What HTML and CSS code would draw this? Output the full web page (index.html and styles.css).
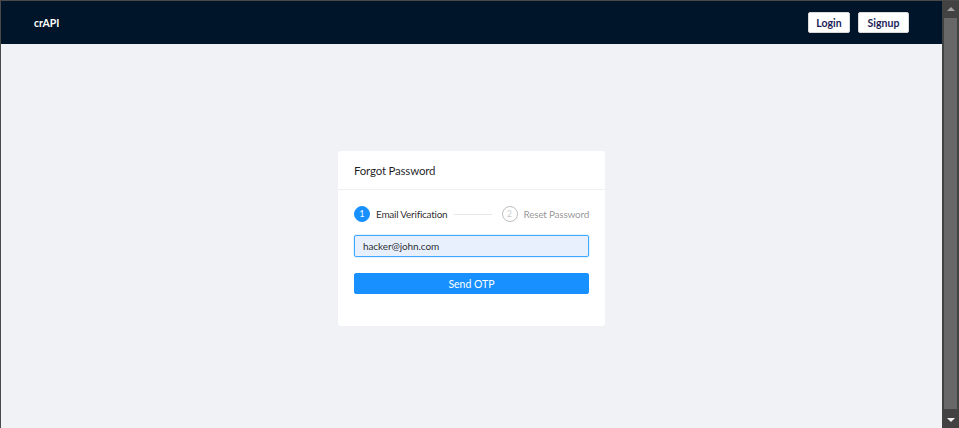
FILE: index.html
```html
<!DOCTYPE html>
<html>
<head>
<meta charset="utf-8">
<link rel="stylesheet" href="styles.css">
</head>
<body>
<div class="frame">
  <div class="page">
    <header class="topbar">
      <div class="brand">crAPI</div>
      <div class="actions">
        <button class="nav-btn">Login</button>
        <button class="nav-btn">Signup</button>
      </div>
    </header>
    <main class="main">
      <section class="card">
        <div class="card-head">Forgot Password</div>
        <div class="card-body">
          <div class="steps">
            <div class="step active">
              <span class="step-icon">1</span>
              <span class="step-title">Email Verification</span>
            </div>
            <div class="step-line"></div>
            <div class="step wait">
              <span class="step-icon">2</span>
              <span class="step-title">Reset Password</span>
            </div>
          </div>
          <input class="field" type="text" value="hacker@john.com">
          <button class="primary">Send OTP</button>
        </div>
      </section>
    </main>
  </div>
  <div class="scrollbar">
    <div class="arrow up"></div>
    <div class="track"><div class="thumb"></div></div>
    <div class="arrow down"></div>
  </div>
</div>
</body>
</html>
```

FILE: styles.css
```css
* { box-sizing: border-box; }
html, body { margin: 0; padding: 0; height: 100%; overflow: hidden; }
body { font-family: "Lato", "Noto Sans", sans-serif; color: rgba(0,0,0,0.85); }

.frame {
  display: flex;
  width: 959px;
  height: 428px;
  border-top: 1px solid #4a4a4a;
  border-left: 1px solid #4a4a4a;
  background: #f0f2f5;
}
.page { flex: 1; display: flex; flex-direction: column; min-width: 0; }

.topbar {
  height: 43px;
  background: #001529;
  display: flex;
  align-items: center;
  justify-content: space-between;
  padding: 0 33px 0 33px;
}
.brand { color: #fff; font-weight: 700; font-size: 10.5px; }
.actions { display: flex; gap: 8px; }
.nav-btn {
  height: 21px;
  padding: 0;
  background: #fff;
  border: 1px solid #d9d9d9;
  border-radius: 2px;
  font-family: inherit;
  font-weight: 700;
  font-size: 10.5px;
  color: #1c1c5a;
}
.nav-btn:first-child { width: 42px; }
.nav-btn:last-child { width: 51px; }

.main { flex: 1; display: flex; justify-content: center; align-items: flex-start; padding-top: 107px; }
.card { width: 267px; background: #fff; border-radius: 3px; }
.card-head {
  height: 39px;
  display: flex;
  align-items: center;
  padding: 0 16px;
  font-size: 11.5px;
  letter-spacing: -0.2px;
  color: rgba(0,0,0,0.88);
  border-bottom: 1px solid #f0f0f0;
}
.card-body { padding: 16px 16px 32px; display: flex; flex-direction: column; }

.steps { display: flex; align-items: center; height: 16px; }
.step { display: flex; align-items: center; gap: 6px; font-size: 10px; letter-spacing: -0.25px; white-space: nowrap; }
.step-icon {
  width: 16px; height: 16px; border-radius: 50%;
  display: flex; align-items: center; justify-content: center;
  font-size: 8.5px; letter-spacing: 0;
}
.step.active .step-icon { background: #1890ff; color: #fff; border: 1px solid #1890ff; }
.step.active .step-title { color: rgba(0,0,0,0.85); }
.step.wait .step-icon { border: 1px solid rgba(0,0,0,0.25); color: rgba(0,0,0,0.25); }
.step.wait .step-title { color: rgba(0,0,0,0.45); }
.step-line { flex: 1; height: 1px; background: #e8e8e8; margin: 0 10px 0 7px; }

.field {
  margin-top: 13px;
  height: 22px;
  width: 100%;
  border: 1px solid #40a9ff;
  border-radius: 2px;
  background: #e8f0fe;
  padding: 0 8px;
  font-family: inherit;
  font-size: 10px;
  letter-spacing: -0.1px;
  color: rgba(0,0,0,0.85);
  outline: none;
  box-shadow: 0 0 0 1px rgba(24,144,255,0.12);
}
.primary {
  margin-top: 16px;
  height: 21px;
  width: 100%;
  background: #1890ff;
  border: 1px solid #1890ff;
  border-radius: 2px;
  color: #fff;
  font-family: inherit;
  font-size: 10.5px;
}

.scrollbar {
  width: 17px;
  background: #424242;
  display: flex;
  flex-direction: column;
  align-items: center;
}
.arrow { height: 16px; width: 17px; display: flex; align-items: center; justify-content: center; }
.arrow.up::before {
  content: ""; border-left: 4px solid transparent; border-right: 4px solid transparent;
  border-bottom: 4px solid #a3a3a3;
}
.arrow.down::before {
  content: ""; border-left: 4px solid transparent; border-right: 4px solid transparent;
  border-top: 4px solid #f0f0f0;
}
.track { flex: 1; width: 100%; padding: 1px 2px 3px; display: flex; }
.thumb { flex: 1; background: #686868; }
```
